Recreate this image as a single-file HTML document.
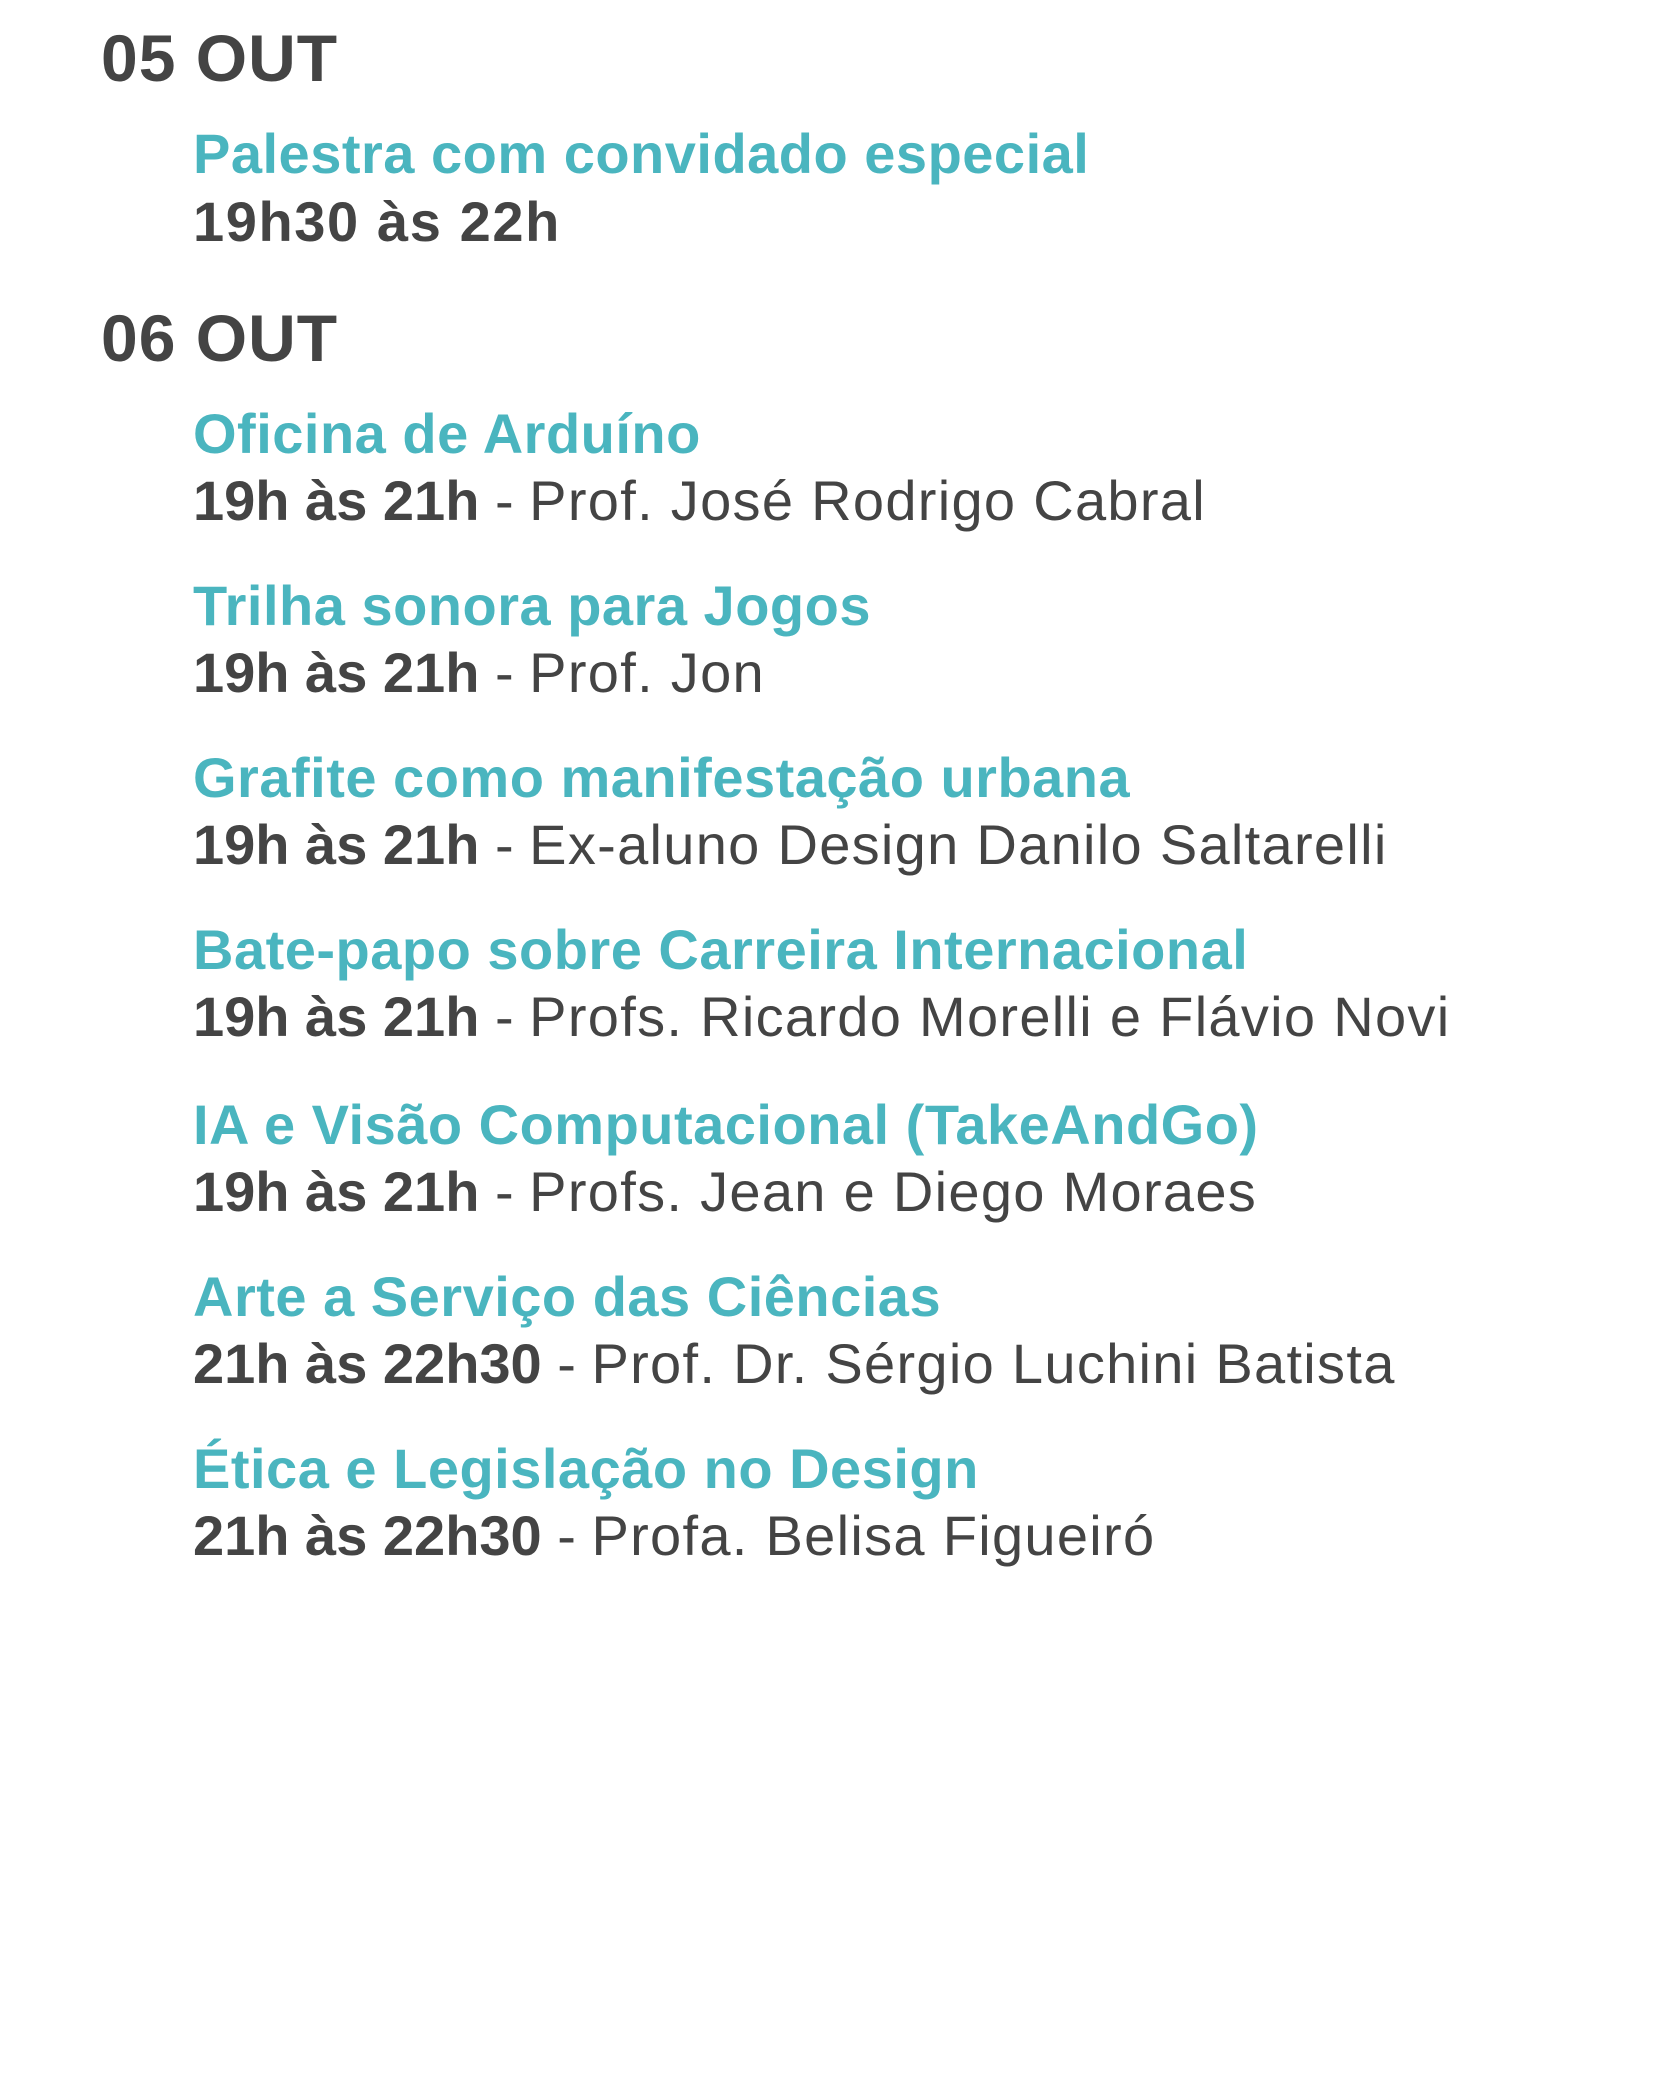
<!DOCTYPE html>
<html><head><meta charset="utf-8"><style>
html,body{margin:0;padding:0;background:#fff;width:1656px;height:2088px;overflow:hidden}
.l{position:absolute;white-space:nowrap;font-family:"Liberation Sans",sans-serif;line-height:1}
.h{left:101px;font-size:66px;font-weight:bold;color:#444;letter-spacing:1px}
.t{left:193px;font-size:56px;font-weight:bold;color:#4ab5bf;letter-spacing:0.5px}
.s{left:193px;font-size:56px;color:#444}
.s b{font-weight:bold}
.s i{font-style:normal;letter-spacing:1.3px}
</style></head><body>
<div class="l h" style="top:25px">05 OUT</div>
<div class="l t" style="top:126px">Palestra com convidado especial</div>
<div class="l s" style="top:194px"><b style="letter-spacing:1.6px">19h30 às 22h</b></div>
<div class="l h" style="top:305px">06 OUT</div>
<div class="l t" style="top:406px">Oficina de Arduíno</div>
<div class="l s" style="top:473px"><b>19h às 21h</b> - <i>Prof. José Rodrigo Cabral</i></div>
<div class="l t" style="top:578px">Trilha sonora para Jogos</div>
<div class="l s" style="top:645px"><b>19h às 21h</b> - <i>Prof. Jon</i></div>
<div class="l t" style="top:750px">Grafite como manifestação urbana</div>
<div class="l s" style="top:817px"><b>19h às 21h</b> - <i>Ex-aluno Design Danilo Saltarelli</i></div>
<div class="l t" style="top:922px">Bate-papo sobre Carreira Internacional</div>
<div class="l s" style="top:989px"><b>19h às 21h</b> - <i>Profs. Ricardo Morelli e Flávio Novi</i></div>
<div class="l t" style="top:1097px">IA e Visão Computacional (TakeAndGo)</div>
<div class="l s" style="top:1164px"><b>19h às 21h</b> - <i>Profs. Jean e Diego Moraes</i></div>
<div class="l t" style="top:1269px">Arte a Serviço das Ciências</div>
<div class="l s" style="top:1336px"><b>21h às 22h30</b> - <i>Prof. Dr. Sérgio Luchini Batista</i></div>
<div class="l t" style="top:1441px">Ética e Legislação no Design</div>
<div class="l s" style="top:1508px"><b>21h às 22h30</b> - <i>Profa. Belisa Figueiró</i></div>
</body></html>
